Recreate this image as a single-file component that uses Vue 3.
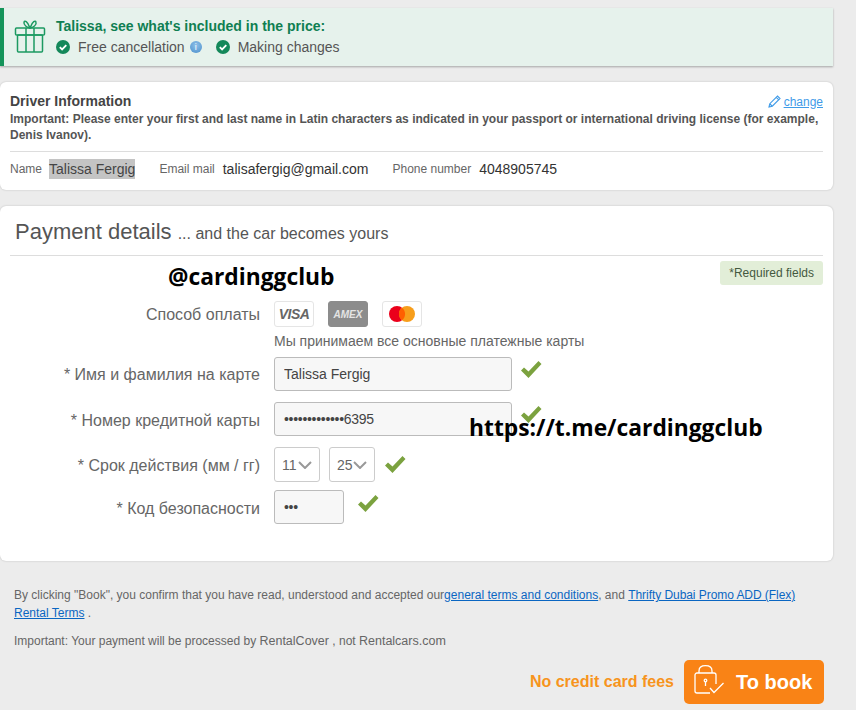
<script setup>
const drivers = [
  { label: 'Email mail', value: 'talisafergig@gmail.com' },
  { label: 'Phone number', value: '4048905745' },
]
</script>

<template>
  <div class="page">
    <section class="banner">
      <svg class="gift" width="32" height="36" viewBox="0 0 32 36" fill="none" stroke="#1d9a62" stroke-width="1.5">
        <rect x="1.500" y="9" width="29" height="7" rx="1" />
        <rect x="3.500" y="16" width="25" height="17" rx="1" />
        <path d="M12 9v24M20 9v24" />
        <path d="M16 9C13 8.500 9.500 6 10 3.500 10.500 1 13.500 2 16 9ZM16 9C19 8.500 23 6 22 3.500 21.500 1 18.500 2 16 9Z" />
      </svg>
      <div class="banner-text">
        <strong class="banner-title">Talissa, see what's included in the price:</strong>
        <div class="perks">
          <span class="perk">
            <svg width="14" height="14" viewBox="0 0 14 14"><circle cx="7" cy="7" r="7" fill="#14885a" /><path d="M3.800 7.200l2.300 2.300 4.200-4.300" fill="none" stroke="#fff" stroke-width="1.800" /></svg>
            Free cancellation
            <span class="info">i</span>
          </span>
          <span class="perk">
            <svg width="14" height="14" viewBox="0 0 14 14"><circle cx="7" cy="7" r="7" fill="#14885a" /><path d="M3.800 7.200l2.300 2.300 4.200-4.300" fill="none" stroke="#fff" stroke-width="1.800" /></svg>
            Making changes
          </span>
        </div>
      </div>
    </section>

    <section class="card driver">
      <div class="driver-head">
        <h2>Driver Information</h2>
        <a class="change">
          <svg width="13" height="13" viewBox="0 0 13 13" fill="none" stroke="#3f9be8" stroke-width="1.100"><path d="M1 12l.8-3.300L9.500 1l2.500 2.500-7.700 7.700zM8.300 2.300l2.500 2.500M2 9l2 2" /></svg>
          <span>change</span>
        </a>
      </div>
      <p class="important">Important: Please enter your first and last name in Latin characters as indicated in your passport or international driving license (for example, Denis Ivanov).</p>
      <div class="driver-data">
        <span class="dl first-dl">Name</span><span class="dv selected">Talissa Fergig</span>
        <template v-for="d in drivers" :key="d.label">
          <span class="dl gap">{{ d.label }}</span><span class="dv">{{ d.value }}</span>
        </template>
      </div>
    </section>

    <section class="card payment">
      <h1>Payment details <small>... and the car becomes yours</small></h1>
      <div class="req-row"><span class="req">*Required fields</span></div>

      <div class="form">
        <label class="first">Способ оплаты</label>
        <div class="logos-block">
          <div class="logos">
            <span class="logo"><span class="visa">VISA</span></span>
            <span class="logo amex"><span>AMEX</span></span>
            <span class="logo">
              <svg width="26" height="16" viewBox="0 0 26 16"><circle cx="8" cy="8" r="8" fill="#eb001b" /><circle cx="18" cy="8" r="8" fill="#f79e1b" /><path d="M13 1.700a8 8 0 0 1 0 12.600a8 8 0 0 1 0-12.600z" fill="#ff5f00" /></svg>
            </span>
          </div>
          <p class="accept">Мы принимаем все основные платежные карты</p>
        </div>

        <label class="l-name">* Имя и фамилия на карте</label>
        <div class="ctl c-name">
          <input class="field wide" value="Talissa Fergig" readonly />
          <svg class="tick" width="21" height="17" viewBox="0 0 21 17"><path d="M0 9.500L3 6.500 7.500 10.500 17.500 0 20.500 3 7.500 17z" fill="#7ba23f" /></svg>
        </div>

        <label class="l-card">* Номер кредитной карты</label>
        <div class="ctl c-card">
          <input class="field wide dots" value="•••••••••••••6395" readonly />
          <svg class="tick" width="21" height="17" viewBox="0 0 21 17"><path d="M0 9.500L3 6.500 7.500 10.500 17.500 0 20.500 3 7.500 17z" fill="#7ba23f" /></svg>
        </div>

        <label class="l-date">* Срок действия (мм / гг)</label>
        <div class="ctl c-date">
          <span class="select">11<svg width="14" height="8" viewBox="0 0 14 8" fill="none" stroke="#999" stroke-width="2"><path d="M1 1l6 6 6-6" /></svg></span>
          <span class="select">25<svg width="14" height="8" viewBox="0 0 14 8" fill="none" stroke="#999" stroke-width="2"><path d="M1 1l6 6 6-6" /></svg></span>
          <svg class="tick" width="21" height="17" viewBox="0 0 21 17"><path d="M0 9.500L3 6.500 7.500 10.500 17.500 0 20.500 3 7.500 17z" fill="#7ba23f" /></svg>
        </div>

        <label class="l-cvv">* Код безопасности</label>
        <div class="ctl c-cvv">
          <input class="field small dots" value="•••" readonly />
          <svg class="tick" width="21" height="17" viewBox="0 0 21 17"><path d="M0 9.500L3 6.500 7.500 10.500 17.500 0 20.500 3 7.500 17z" fill="#7ba23f" /></svg>
        </div>
      </div>

      <div class="mark mark-a">@cardinggclub</div>
      <div class="mark mark-b">https://t.me/cardinggclub</div>
    </section>

    <footer class="foot">
      <p class="terms">By clicking "Book", you confirm that you have read, understood and accepted our<a>general terms and conditions</a>, and <a class="tight">Thrifty Dubai Promo ADD (Flex)</a><br /><a>Rental Terms</a> .</p>
      <p class="proc">Important: Your payment will be processed by <span>RentalCover</span> , not <span class="rc">Rentalcars.com</span></p>
      <div class="cta">
        <span class="fees">No credit card fees</span>
        <button class="book">
          <svg class="lock" width="32" height="32" viewBox="0 0 32 32" fill="none" stroke="#fff" stroke-width="1.300">
            <path d="M6 8V6C6 2.500 8.500 .7 12.500 .7S19 2.500 19 6V8" />
            <path d="M23 19V10a2 2 0 0 0-2-2H4a2 2 0 0 0-2 2v16a2 2 0 0 0 2 2h13" />
            <circle cx="12.500" cy="15.500" r="1.300" />
            <path d="M12.500 17v4M17 23l4 4.500 9.500-9.500" />
          </svg>
          <span>To book</span>
        </button>
      </div>
    </footer>
  </div>
</template>

<style>
body { margin: 0; background: #ececec; }
</style>

<style scoped>
.page {
  width: 856px;
  height: 710px;
  overflow: hidden;
  box-sizing: border-box;
  padding: 8px 23px 0 0;
  background: #ececec;
  font-family: "Liberation Sans", Arial, sans-serif;
  color: #555;
}
.banner {
  height: 58px;
  box-sizing: border-box;
  background: #e6f2ec;
  border-left: 4px solid #14945a;
  box-shadow: 0 1px 2px rgba(0, 0, 0, 0.3);
  display: flex;
  align-items: center;
  padding-left: 10px;
  gap: 10px;
}
.gift { flex: none; margin-top: -1px; }
.banner-text { display: flex; flex-direction: column; gap: 5px; margin-top: -1px; }
.banner-title { font-size: 14px; color: #0f7f52; }
.perks { display: flex; gap: 14px; font-size: 14px; color: #555; }
.perk { display: flex; align-items: center; gap: 8px; }
.perk .info { margin-left: -3px; }
.info {
  width: 12px; height: 12px; border-radius: 50%;
  background: radial-gradient(circle at 50% 35%, #8fc0e8, #4a8fcc);
  color: #fff; font-size: 9px; line-height: 12px;
  text-align: center;
}
.card {
  background: #fff;
  border-radius: 6px;
  box-shadow: 0 0 2px rgba(0, 0, 0, 0.22);
}
.driver {
  margin-top: 16px;
  height: 108px;
  box-sizing: border-box;
  padding: 12px 10px 0;
}
.driver-head { display: flex; justify-content: space-between; align-items: center; height: 15px; }
.driver-head h2 { margin: 0; font-size: 14px; line-height: 15px; color: #444; }
.change { display: flex; align-items: center; gap: 3px; font-size: 12px; color: #3f9be8; }
.change span { text-decoration: underline; }
.important { margin: 2px 0 0; font-size: 12px; line-height: 16px; font-weight: bold; color: #555; }
.driver-data {
  margin-top: 8px;
  border-top: 1px solid #ddd;
  padding-top: 7px;
  display: flex;
  align-items: center;
  font-size: 12px;
}
.dl { color: #666; margin-right: 8px; }
.first-dl { margin-right: 7px; }
.dl.gap { margin-left: 24px; }
.dv { font-size: 14px; color: #333; line-height: 20px; }
.selected { background: #c4c4c4; color: #444; }
.payment {
  margin-top: 16px;
  height: 355px;
  position: relative;
  box-sizing: border-box;
  padding: 0 10px;
}
.payment h1 {
  margin: 0;
  height: 50px;
  box-sizing: border-box;
  padding: 13px 0 0 5px;
  border-bottom: 1px solid #ddd;
  font-weight: normal;
  font-size: 22px;
  line-height: 26px;
  color: #555;
}
.payment small { font-size: 16px; color: #555; }
.req-row { display: flex; justify-content: flex-end; margin-top: 5px; height: 24px; }
.req {
  background: #e2eed8;
  border-radius: 3px;
  font-size: 12px;
  line-height: 24px;
  padding: 0 9px;
  color: #44593f;
}
.form {
  display: grid;
  grid-template-columns: 250px 1fr;
  column-gap: 14px;
  margin-top: 16px;
}
.form label {
  text-align: right;
  font-size: 16px;
  color: #666;
}
.first { line-height: 28px; }
.logos-block { height: 56px; }
.logos { display: flex; gap: 14px; }
.logo {
  width: 40px; height: 26px; box-sizing: border-box;
  border: 1px solid #e5e5e5; border-radius: 3px;
  display: flex; align-items: center; justify-content: center;
}
.visa { font-size: 14px; font-weight: bold; font-style: italic; color: #666; letter-spacing: -0.5px; }
.amex { background: #8c8c8c; border-color: #8c8c8c; color: #e4e4e4; font-size: 10px; font-weight: bold; font-style: italic; }
.accept { margin: 6px 0 0; font-size: 14px; line-height: 16px; color: #666; }
.ctl { display: flex; align-items: flex-start; }
.field {
  box-sizing: border-box;
  border: 1px solid #bbb;
  border-radius: 3px;
  background: #f7f7f7;
  font: 14px "Liberation Sans", Arial, sans-serif;
  color: #444;
  padding: 0 9px;
  outline: none;
}
.dots { letter-spacing: -0.3px; }
.wide { width: 238px; height: 34px; }
.small { width: 70px; height: 34px; }
.tick { flex: none; }
.c-name .tick, .c-card .tick { margin: 4px 0 0 9px; }
.c-name { height: 45px; }
.c-card { height: 45px; }
.c-date { height: 43px; gap: 9px; }
.c-date .tick { margin: 9px 0 0 1px; }
.c-cvv .tick { margin: 5px 0 0 14px; }
.select {
  width: 46px; height: 35px; box-sizing: border-box;
  border: 1px solid #ccc; border-radius: 3px;
  display: flex; align-items: center; justify-content: space-between;
  padding: 0 7px; font-size: 14px; color: #666;
}
.l-name { padding-top: 9px; }
.l-card, .l-date, .l-cvv { padding-top: 10px; }
.mark {
  position: absolute;
  font-family: "Open Sans", sans-serif;
  font-weight: 700;
  font-size: 22.800px;
  line-height: 30px;
  color: #000;
}
.mark-a { left: 168px; top: 56px; }
.mark-b { left: 469px; top: 207px; }
.foot { padding: 0 0 0 14px; font-size: 12px; color: #666; }
.terms { margin: 0; padding-top: 25px; line-height: 18px; }
.terms a { color: #0a66c2; text-decoration: underline; }
.terms .tight { letter-spacing: -0.06px; }
.proc { margin: 11px 0 0; line-height: 16px; }
.proc span { font-size: 12.500px; }
.cta { display: flex; justify-content: flex-end; align-items: center; gap: 10px; margin-top: 11px; margin-right: 9px; }
.fees { font-size: 16px; font-weight: bold; color: #f7941d; }
.book {
  width: 140px; height: 44px;
  border: 0; border-radius: 5px;
  background: #f98316; color: #fff;
  display: flex; align-items: center; gap: 11px;
  padding: 0 0 0 9px;
  font: bold 20px "Liberation Sans", Arial, sans-serif;
}
.lock { flex: none; margin-top: -2px; }
</style>
